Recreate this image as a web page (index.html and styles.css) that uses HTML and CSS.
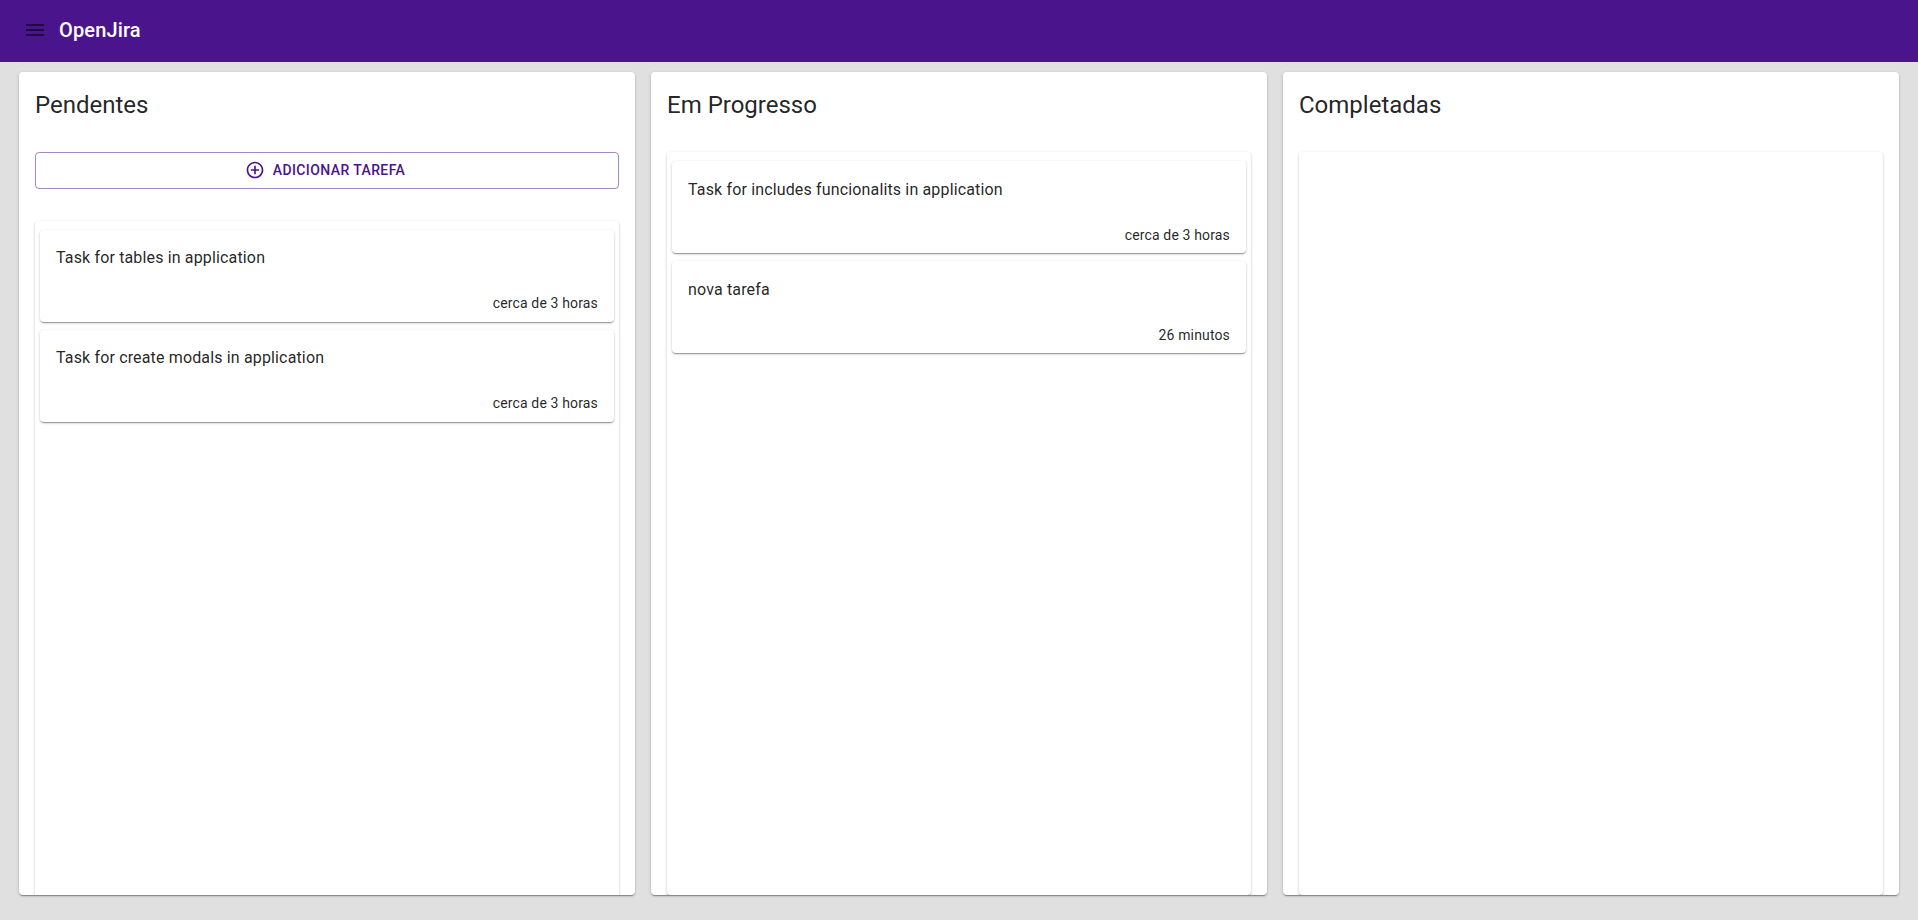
FILE: index.html
```html
<!DOCTYPE html>
<html lang="pt-BR">
<head>
<meta charset="utf-8">
<title>OpenJira</title>
<link rel="stylesheet" href="styles.css">
</head>
<body>
<header class="navbar">
  <button class="menu-button" aria-label="Menu">
    <svg viewBox="0 0 24 24"><path d="M3 18h18v-2H3zm0-5h18v-2H3zm0-7v2h18V6z"/></svg>
  </button>
  <h1 class="brand">OpenJira</h1>
</header>
<main class="board">
  <section class="column">
    <h2 class="column-title">Pendentes</h2>
    <button class="add-button">
      <svg viewBox="0 0 24 24"><path d="M13 7h-2v4H7v2h4v4h2v-4h4v-2h-4zm-1-5C6.48 2 2 6.48 2 12s4.480 10 10 10 10-4.480 10-10S17.520 2 12 2m0 18c-4.410 0-8-3.590-8-8s3.590-8 8-8 8 3.590 8 8-3.590 8-8 8"/></svg>
      <span>Adicionar Tarefa</span>
    </button>
    <div class="task-list">
      <article class="task"><p class="description">Task for tables in application</p><p class="time">cerca de 3 horas</p></article>
      <article class="task"><p class="description">Task for create modals in application</p><p class="time">cerca de 3 horas</p></article>
    </div>
  </section>
  <section class="column">
    <h2 class="column-title">Em Progresso</h2>
    <div class="task-list">
      <article class="task"><p class="description">Task for includes funcionalits in application</p><p class="time">cerca de 3 horas</p></article>
      <article class="task"><p class="description">nova tarefa</p><p class="time">26 minutos</p></article>
    </div>
  </section>
  <section class="column">
    <h2 class="column-title">Completadas</h2>
    <div class="task-list"></div>
  </section>
</main>
</body>
</html>
```
FILE: styles.css
```css
* { box-sizing: border-box; }

body {
  margin: 0;
  height: 100vh;
  overflow: hidden;
  background: #e0e0e0;
  color: rgba(0, 0, 0, 0.87);
  font-family: Roboto, "Liberation Sans", sans-serif;
}

h1, h2, p { margin: 0; }

button {
  font-family: inherit;
  background: none;
  cursor: pointer;
}

.navbar {
  display: flex;
  align-items: center;
  height: 62px;
  padding: 0 11px 2px;
  background: #4a148c;
  color: #fff;
}

.menu-button {
  display: flex;
  padding: 12px;
  border: 0;
  color: rgba(0, 0, 0, 0.54);
}

.menu-button svg {
  width: 24px;
  height: 24px;
  fill: currentColor;
}

.brand {
  font-size: 20px;
  font-weight: 500;
  line-height: 1.6;
  letter-spacing: 0.0075em;
}

.board {
  display: grid;
  grid-template-columns: repeat(3, 1fr);
  gap: 16px;
  padding: 10px 19px 0;
}

.column,
.task-list,
.task {
  background: #fff;
  border-radius: 4px;
  box-shadow: 0 2px 1px -1px rgba(0, 0, 0, 0.2), 0 1px 1px rgba(0, 0, 0, 0.14), 0 1px 3px rgba(0, 0, 0, 0.2);
}

.column {
  display: flex;
  flex-direction: column;
  height: calc(100vh - 97px);
  padding: 16px 16px 0;
  overflow: hidden;
}

.column-title {
  flex-shrink: 0;
  padding-top: 0.7px;
  margin-bottom: 31.3px;
  font-size: 24px;
  font-weight: 400;
  line-height: 1.334;
}

.add-button {
  display: flex;
  align-items: center;
  justify-content: center;
  flex-shrink: 0;
  margin-bottom: 32px;
  padding: 5px 15px;
  border: 1px solid rgba(74, 20, 140, 0.5);
  border-radius: 4px;
  color: #4a148c;
  font-size: 14px;
  font-weight: 500;
  line-height: 1.75;
  letter-spacing: 0.02857em;
  text-transform: uppercase;
}

.add-button svg {
  width: 20px;
  height: 20px;
  margin: 0 8px 0 -4px;
  fill: currentColor;
}

.task-list {
  flex: 0 0 calc(100vh - 177px);
  padding: 9px 5px;
}

.task { margin-bottom: 8px; }

.description {
  padding: 16.6px 16px 15.4px;
  font-size: 16px;
  line-height: 1.5;
  letter-spacing: 0.00938em;
}

.time {
  padding: 7.75px 16px 8.25px 8px;
  font-size: 14px;
  line-height: 1.43;
  letter-spacing: 0.01071em;
  text-align: right;
}
```
